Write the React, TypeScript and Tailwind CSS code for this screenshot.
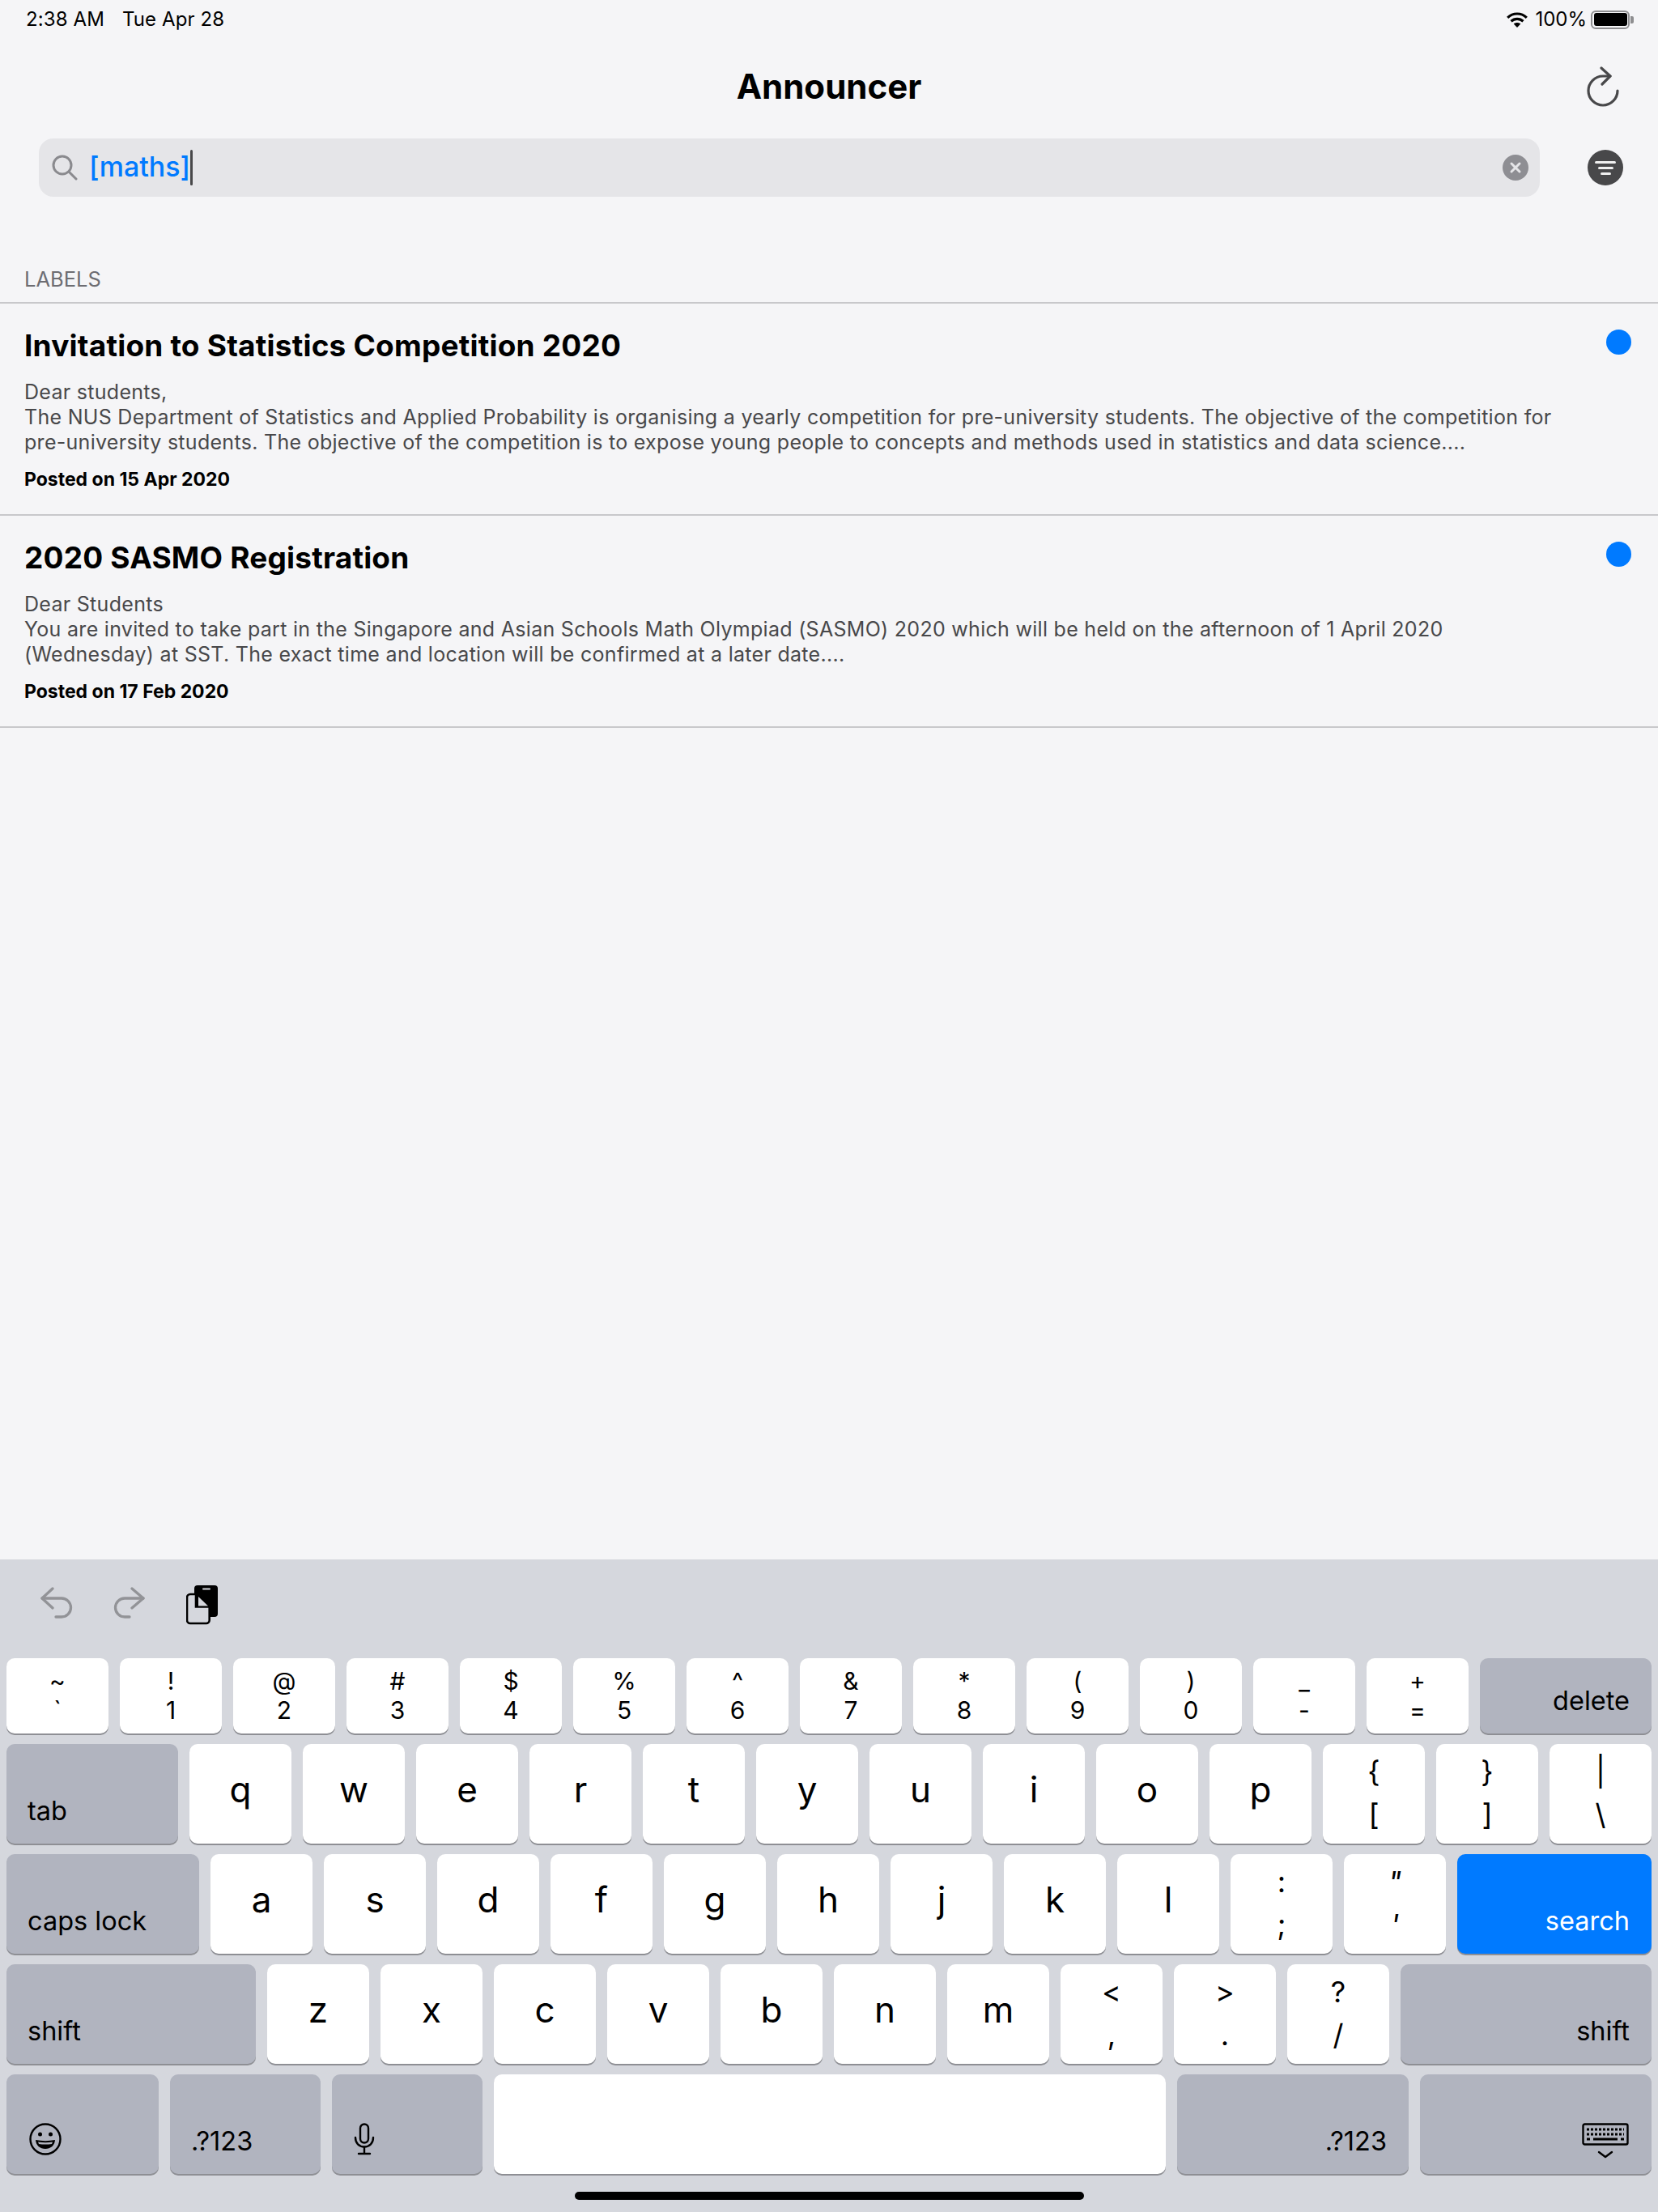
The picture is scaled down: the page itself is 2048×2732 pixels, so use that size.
import React from 'react'

type KeyProps = {
  top?: string
  bottom?: string
  label?: string
  side?: 'left' | 'right'
  tone?: 'white' | 'dark' | 'blue'
  width?: string
  tall?: boolean
  slanted?: boolean
  children?: React.ReactNode
}

const Key: React.FC<KeyProps> = ({ top, bottom, label, side, tone = 'white', width = 'w-[126px]', tall = true, slanted = false, children }) => {
  const bg = tone === 'white' ? 'bg-white' : tone === 'dark' ? 'bg-[#b1b4bf]' : 'bg-[#007aff] text-white'
  const h = tall ? 'h-[123px]' : 'h-[93px]'
  const shared = `${width} ${h} ${bg} shrink-0 rounded-[10px] shadow-[0_2px_0_#8e8f94]`

  // action keys keep their caption in a bottom corner
  if (side) {
    return (
      <div className={`${shared} flex items-end pb-[21px] ${side === 'left' ? 'justify-start pl-[26px]' : 'justify-end pr-[27px]'} text-[32.5px] leading-[38px]`}>
        {children ?? label}
      </div>
    )
  }
  if (top !== undefined) {
    return (
      <div className={`${shared} flex flex-col items-center ${slanted ? 'italic' : ''} ${tall ? 'pt-[8px] text-[36px] leading-[53px]' : 'pt-[10px] text-[30px] leading-[36px]'}`}>
        <span>{top}</span>
        <span>{bottom}</span>
      </div>
    )
  }
  return (
    <div className={`${shared} flex items-start justify-center pt-[29px] text-[44px] leading-[54px]`}>
      {label}
    </div>
  )
}

const Row: React.FC<{ children: React.ReactNode }> = ({ children }) => (
  <div className="flex gap-[14px]">{children}</div>
)

const numbers = [['!', '1'], ['@', '2'], ['#', '3'], ['$', '4'], ['%', '5'], ['^', '6'], ['&', '7'], ['*', '8'], ['(', '9'], [')', '0'], ['_', '-'], ['+', '=']]

const Announcement: React.FC<{ title: string; lines: string[]; posted: string }> = ({ title, lines, posted }) => (
  <div className="relative h-[262px] border-b-2 border-[#c8c8cb] pl-[30px] pt-[27px]">
    <div className="text-[37px] leading-[50px] font-bold tracking-[0.2px] text-black">{title}</div>
    <div className="mt-[17px] text-[25px] leading-[31px] tracking-[0.29px] text-[#48484a]">
      {lines.map((line) => (
        <div key={line} className="whitespace-nowrap">{line}</div>
      ))}
    </div>
    <div className="mt-[15px] text-[23px] leading-[30px] font-bold text-black">{posted}</div>
    <div className="absolute right-[33px] top-[32px] h-[31px] w-[31px] rounded-full bg-[#007aff]" />
  </div>
)

export default function App() {
  return (
    <div className="flex h-[2732px] w-[2048px] flex-col overflow-hidden bg-[#f5f5f7] font-['Inter',sans-serif] text-black">
      {/* Status bar */}
      <div className="flex h-[48px] items-center justify-between pl-[32px] pr-[30px] text-[24px]">
        <div className="flex gap-[22px] tracking-[0.1px]">
          <span>2:38 AM</span>
          <span>Tue Apr 28</span>
        </div>
        <div className="flex items-center">
          <svg width="26" height="19" viewBox="0 0 26 19" fill="none" stroke="#000" strokeWidth="3.2">
            <path d="M1.200 6.800C7.800 .400 18.200 .400 24.800 6.800" />
            <path d="M5.500 11.200C9.800 7.300 16.200 7.300 20.500 11.200" />
            <path d="M13 19l4.300-4.500c-2.500-2-6.100-2-8.600 0z" fill="#000" stroke="none" />
          </svg>
          <span className="ml-[9px]">100%</span>
          <div className="ml-[5px] flex items-center">
            <div className="flex h-[23px] w-[48px] items-center justify-center rounded-[6px] border-2 border-[#8e8e90]">
              <div className="h-[16px] w-[41px] rounded-[3px] bg-black" />
            </div>
            <div className="ml-[1px] h-[9px] w-[4px] rounded-r-[2px] bg-[#8e8e90]" />
          </div>
        </div>
      </div>

      {/* Title */}
      <div className="relative flex h-[123px] items-center justify-center pb-[6px]">
        <span className="text-[42px] leading-[50px] font-bold">Announcer</span>
        <svg className="absolute right-[48px] top-[34px]" width="40" height="52" viewBox="0 0 40 52" fill="none" stroke="#48484a" strokeWidth="3.200" strokeLinecap="round" strokeLinejoin="round">
          <path d="M29 12H20A18 18 0 1 0 38 30" />
          <path d="M18 2l11 10-10 10" />
        </svg>
      </div>

      {/* Search */}
      <div className="flex items-center pl-[48px] pr-[43px]">
        <div className="flex h-[72px] w-[1854px] items-center rounded-[18px] bg-[#e5e5e8] pl-[16px] pr-[14px]">
          <svg width="32" height="32" viewBox="0 0 32 32" fill="none" stroke="#8a8a8e" strokeWidth="3" strokeLinecap="round">
            <circle cx="13" cy="13" r="11" />
            <path d="M21.500 21.500L30 30" />
          </svg>
          <span className="ml-[14px] pb-[2px] text-[34px] leading-[44px] font-medium text-[#007aff]">[maths]</span>
          <div className="h-[44px] w-[3px] rounded-full bg-[#48484a]" />
          <div className="ml-auto flex h-[32px] w-[32px] items-center justify-center rounded-full bg-[#8e8e93]">
            <svg width="16" height="16" viewBox="0 0 16 16" stroke="#e5e5e8" strokeWidth="3" strokeLinecap="round">
              <path d="M3 3l10 10M13 3L3 13" />
            </svg>
          </div>
        </div>
        <div className="ml-[59px] flex h-[44px] w-[44px] flex-col items-center justify-center gap-[4px] rounded-full bg-[#48484a]">
          <div className="h-[3px] w-[26px] rounded-full bg-[#f0f0f0]" />
          <div className="h-[3px] w-[19px] rounded-full bg-[#f0f0f0]" />
          <div className="h-[3px] w-[13px] rounded-full bg-[#f0f0f0]" />
        </div>
      </div>

      {/* List */}
      <div className="mt-[87px] pl-[30px] text-[25.5px] leading-[30px] text-[#6d6d72]">LABELS</div>
      <div className="mt-[13px] border-b-2 border-[#c8c8cb]" />
      <Announcement
        title="Invitation to Statistics Competition 2020"
        lines={[
          'Dear students,',
          'The NUS Department of Statistics and Applied Probability is organising a yearly competition for pre-university students. The objective of the competition for',
          'pre-university students. The objective of the competition is to expose young people to concepts and methods used in statistics and data science....',
        ]}
        posted="Posted on 15 Apr 2020"
      />
      <Announcement
        title="2020 SASMO Registration"
        lines={[
          'Dear Students',
          'You are invited to take part in the Singapore and Asian Schools Math Olympiad (SASMO) 2020 which will be held on the afternoon of 1 April 2020',
          '(Wednesday) at SST. The exact time and location will be confirmed at a later date....',
        ]}
        posted="Posted on 17 Feb 2020"
      />

      {/* Keyboard */}
      <div className="relative mt-auto h-[806px] bg-[#d5d7dd]">
        <div className="flex h-[122px] items-start pl-[50px] pt-[31px]">
          <svg className="mt-[3px]" width="40" height="40" viewBox="0 0 40 40" fill="none" stroke="#929397" strokeWidth="3.300" strokeLinecap="round" strokeLinejoin="round">
            <path d="M15 2L2 14l13 12" />
            <path d="M2 14H26a11.500 11.500 0 0 1 0 23H19" />
          </svg>
          <svg className="ml-[50px] mt-[3px]" width="40" height="40" viewBox="0 0 40 40" fill="none" stroke="#929397" strokeWidth="3.300" strokeLinecap="round" strokeLinejoin="round">
            <path d="M23 2l14 12-14 12" />
            <path d="M37 14H14a11.500 11.500 0 0 0 0 23h6" />
          </svg>
          <svg className="ml-[50px]" width="40" height="50" viewBox="0 0 40 50">
            <rect x="10" y="1" width="29" height="39" rx="4" fill="#000" />
            <rect x="20" y="4.500" width="10" height="2" rx="1" fill="#d5d7dd" />
            <path d="M5 12H12V27.500H28.700V44a4 4 0 0 1-4 4H5a4 4 0 0 1-4-4V16a4 4 0 0 1 4-4z" fill="#d5d7dd" stroke="#000" strokeWidth="2.600" />
            <path d="M15 15l12 11.500H15z" fill="#d5d7dd" />
          </svg>
        </div>

        <div className="flex flex-col gap-[13px] pl-[8px]">
          <Row>
            <Key tall={false} top="~" bottom="`" />
            {numbers.map(([top, bottom]) => (
              <Key key={bottom} tall={false} top={top} bottom={bottom} />
            ))}
            <Key tall={false} tone="dark" side="right" label="delete" width="w-[212px]" />
          </Row>
          <Row>
            <Key tone="dark" side="left" label="tab" width="w-[212px]" />
            {['q', 'w', 'e', 'r', 't', 'y', 'u', 'i', 'o', 'p'].map((k) => <Key key={k} label={k} />)}
            <Key top="{" bottom="[" />
            <Key top="}" bottom="]" />
            <Key top="|" bottom="\" />
          </Row>
          <Row>
            <Key tone="dark" side="left" label="caps lock" width="w-[238px]" />
            {['a', 's', 'd', 'f', 'g', 'h', 'j', 'k', 'l'].map((k) => <Key key={k} label={k} />)}
            <Key top=":" bottom=";" />
            <Key slanted top={'"'} bottom="'" />
            <Key tone="blue" side="right" label="search" width="w-[240px]" />
          </Row>
          <Row>
            <Key tone="dark" side="left" label="shift" width="w-[308px]" />
            {['z', 'x', 'c', 'v', 'b', 'n', 'm'].map((k) => <Key key={k} label={k} />)}
            <Key top="<" bottom="," />
            <Key top=">" bottom="." />
            <Key top="?" bottom="/" />
            <Key tone="dark" side="right" label="shift" width="w-[310px]" />
          </Row>
          <Row>
            <Key tone="dark" side="left" width="w-[188px]">
              <svg className="mb-[2px] ml-[2px]" width="40" height="40" viewBox="0 0 40 40" fill="none" stroke="#000" strokeWidth="2.400">
                <circle cx="20" cy="20" r="18.500" />
                <circle cx="13.500" cy="14" r="2.500" fill="#000" stroke="none" />
                <circle cx="26.500" cy="14" r="2.500" fill="#000" stroke="none" />
                <path d="M8 21c8 1.500 16 1.500 24 0-.5 7-5.500 11-12 11s-11.500-4-12-11z" fill="#000" stroke="none" />
                <path d="M11 23.500c6 1 12 1 18 0l-1 2.500c-5 .700-11 .700-16 0z" fill="#b1b4bf" stroke="none" />
              </svg>
            </Key>
            <Key tone="dark" side="left" label=".?123" width="w-[186px]" />
            <Key tone="dark" side="left" width="w-[186px]">
              <svg className="mb-[2px] ml-[1px]" width="26" height="40" viewBox="0 0 26 40" fill="none" stroke="#000" strokeWidth="2.400" strokeLinecap="round">
                <rect x="8" y="1.500" width="10" height="23" rx="5" />
                <path d="M2 18c0 7 4.500 11.500 11 11.500S24 25 24 18" />
                <path d="M13 30v7M6 38h14" />
              </svg>
            </Key>
            <Key width="w-[830px]" label="" />
            <Key tone="dark" side="right" label=".?123" width="w-[286px]" />
            <Key tone="dark" side="right" width="w-[286px]">
              <svg className="mb-[-10px] mr-[1px]" width="58" height="52" viewBox="0 0 58 52" fill="none">
                <rect x="1.500" y="1.500" width="55" height="25" rx="2" stroke="#000" strokeWidth="2.400" />
                <path d="M6 8h46M6 14h46" stroke="#000" strokeWidth="3" strokeDasharray="3 2" />
                <path d="M6 20h4M14 20h30M48 20h4" stroke="#000" strokeWidth="3" />
                <path d="M21 36l8 6 8-6" stroke="#000" strokeWidth="2.400" strokeLinecap="round" strokeLinejoin="round" />
              </svg>
            </Key>
          </Row>
        </div>

        {/* Home indicator */}
        <div className="absolute bottom-[15px] left-[710px] h-[10px] w-[629px] rounded-full bg-black" />
      </div>
    </div>
  )
}
